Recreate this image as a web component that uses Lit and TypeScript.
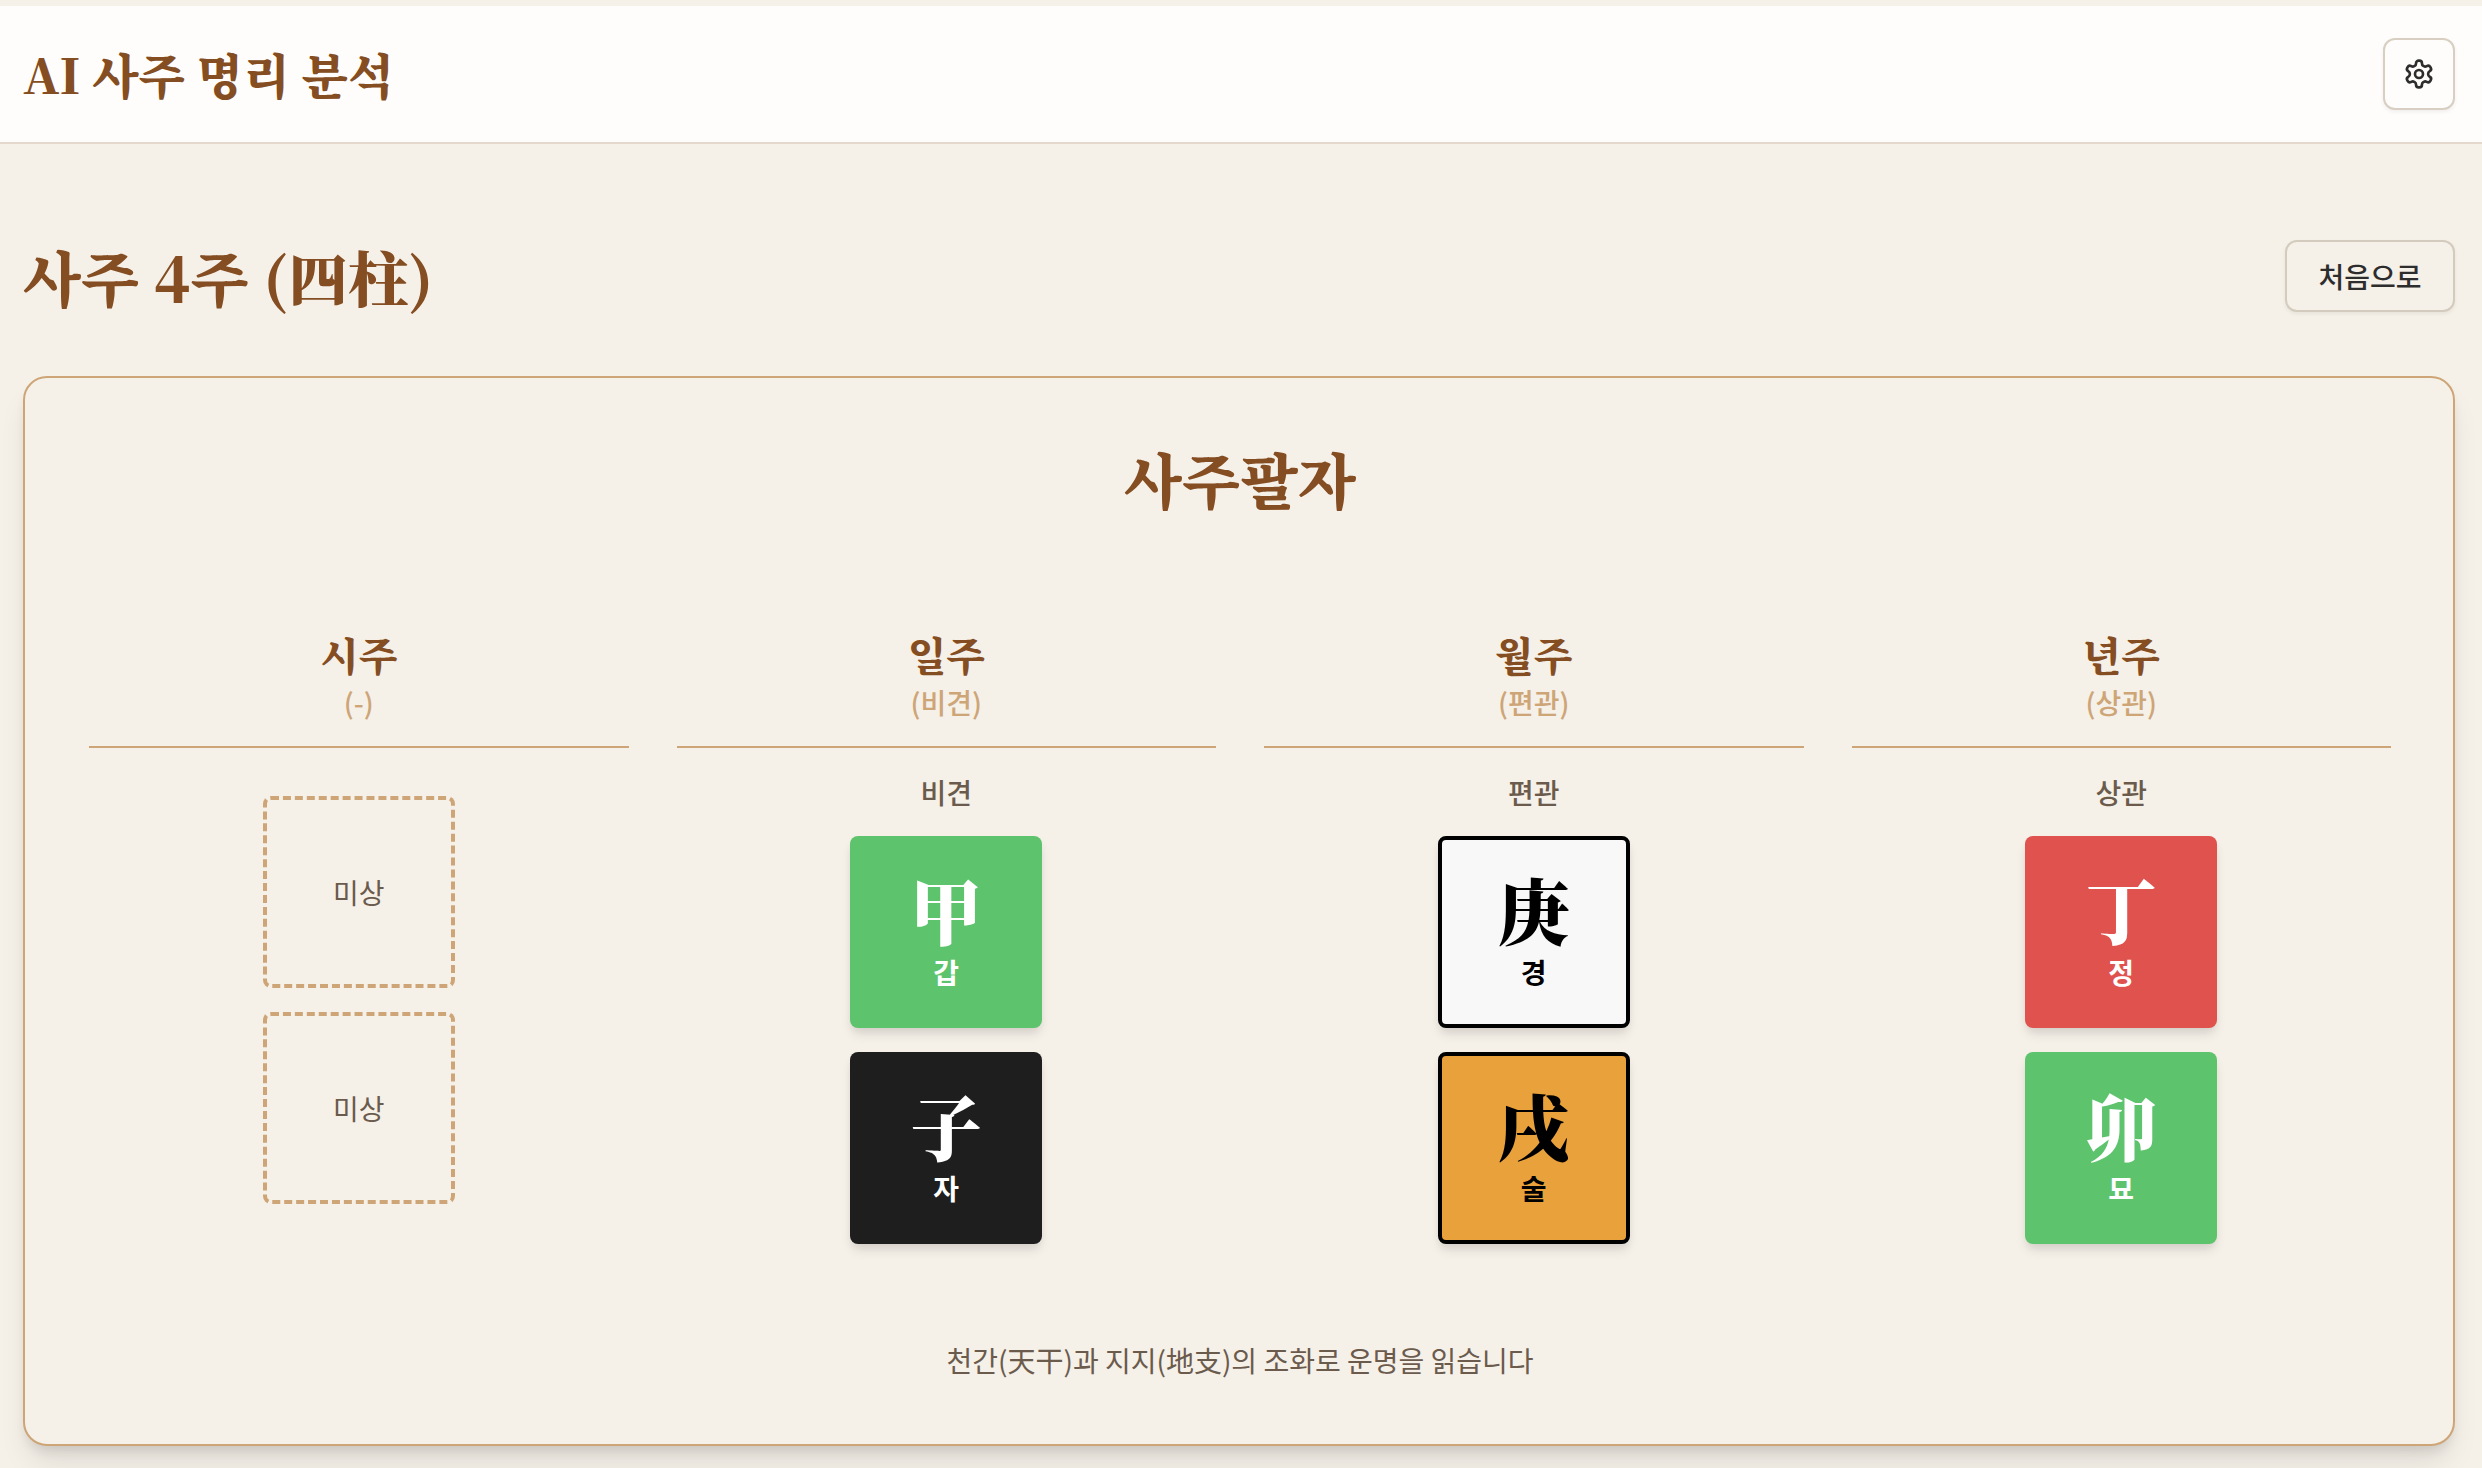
import { LitElement, html, css } from "lit";
import { customElement } from "lit/decorators.js";

const SERIF = css`"Noto Serif CJK KR","Liberation Serif","Noto Sans CJK KR",serif`;

type Tile = { h: string; k: string; cls: string };
type Pillar = { name: string; sub: string; label: string; tiles: Tile[] | null };

const PILLARS: Pillar[] = [
  { name: "시주", sub: "(-)", label: "", tiles: null },
  { name: "일주", sub: "(비견)", label: "비견", tiles: [{ h: "甲", k: "갑", cls: "green" }, { h: "子", k: "자", cls: "black" }] },
  { name: "월주", sub: "(편관)", label: "편관", tiles: [{ h: "庚", k: "경", cls: "white" }, { h: "戌", k: "술", cls: "orange" }] },
  { name: "년주", sub: "(상관)", label: "상관", tiles: [{ h: "丁", k: "정", cls: "red" }, { h: "卯", k: "묘", cls: "green" }] },
];

@customElement("app-root")
export class AppRoot extends LitElement {
  static styles = css`
    :host { display: block; min-height: 1468px; background: #f5f0e8; font-family: "Noto Sans CJK KR","Noto Sans",sans-serif; padding-top: 6px; box-sizing: border-box; overflow: hidden; }
    .top { height: 136px; background: #fefdfb; border-bottom: 2px solid #e5d8cc; display: flex; align-items: center; justify-content: space-between; padding: 0 27px 0 23px; }
    .brand { margin: 0; font: 900 48px/1 ${SERIF}; color: #854d22; }
    .gear { width: 72px; height: 72px; box-sizing: border-box; background: #fefdfb; border: 2px solid #d8cfc2; border-radius: 12px; display: flex; align-items: center; justify-content: center; box-shadow: 0 2px 4px rgba(0,0,0,.06); }
    .gear svg { width: 32px; height: 32px; }
    main { padding: 96px 27px 0 23px; }
    .head { display: flex; align-items: center; justify-content: space-between; height: 72px; margin-bottom: 64px; }
    .head h2 { margin: 0; font: 900 60px/1 ${SERIF}; color: #854d22; }
    .back { width: 170px; height: 72px; box-sizing: border-box; background: #f5f0e8; border: 2px solid #d3cbbd; border-radius: 12px; font: 500 28px/1 "Noto Sans CJK KR",sans-serif; color: #2d2d2d; display: flex; align-items: center; justify-content: center; box-shadow: 0 2px 4px rgba(0,0,0,.06); }
    .card { height: 1070px; box-sizing: border-box; border: 2px solid #cda577; border-radius: 24px; padding: 62px 62px 0 64px; box-shadow: 0 20px 30px -6px rgba(0,0,0,.1), 0 8px 12px -4px rgba(0,0,0,.1); background: #f5f0e8; }
    .card h3 { margin: 0; text-align: center; font: 900 60px/77px ${SERIF}; color: #854d22; }
    .cols { display: grid; grid-template-columns: repeat(4, 1fr); gap: 48px; margin-top: 113px; }
    .col { display: flex; flex-direction: column; align-items: center; }
    .colhead { align-self: stretch; height: 116px; border-bottom: 2px solid #cda577; text-align: center; }
    .name { font: 900 40px/48px ${SERIF}; color: #854d22; }
    .sub { font: 500 28px/40px "Noto Sans CJK KR",sans-serif; color: #cda577; margin-top: 4px; }
    .label { height: 40px; margin-top: 24px; margin-bottom: 24px; font: 500 28px/40px "Noto Sans CJK KR",sans-serif; color: #6b5b4d; }
    .stack { display: flex; flex-direction: column; gap: 24px; }
    .tile { width: 192px; height: 192px; box-sizing: border-box; border-radius: 8px; display: flex; flex-direction: column; align-items: center; justify-content: center; box-shadow: 0 8px 12px -2px rgba(0,0,0,.1), 0 4px 8px -2px rgba(0,0,0,.06); }
    .h { font: 900 72px/72px ${SERIF}; }
    .k { font: 700 28px/40px "Noto Sans CJK KR",sans-serif; margin-top: 8px; }
    .green { background: #5ec36d; color: #fff; }
    .black { background: #1e1e1e; color: #fff; }
    .red { background: #e0524d; color: #fff; }
    .white { background: #f8f8f8; color: #000; border: 4px solid #000; }
    .orange { background: #e9a23b; color: #000; border: 4px solid #000; }
    .empty { width: 192px; height: 192px; box-sizing: border-box; border: 4px dashed #cda577; border-radius: 8px; display: flex; align-items: center; justify-content: center; font: 400 28px/1 "Noto Sans CJK KR",sans-serif; color: #6b5b4d; }
    .gap { margin-top: 48px; }
    .foot { text-align: center; margin-top: 96px; font: 400 28px/40px "Noto Sans CJK KR",sans-serif; color: #6b5b4d; }
  `;

  render() {
    return html`
      <header class="top">
        <h1 class="brand">AI 사주 명리 분석</h1>
        <div class="gear">
          <svg viewBox="0 0 24 24" fill="none" stroke="#2d2d2d" stroke-width="2" stroke-linecap="round" stroke-linejoin="round">
            <path d="M12.22 2h-.44a2 2 0 0 0-2 2v.18a2 2 0 0 1-1 1.73l-.43.25a2 2 0 0 1-2 0l-.15-.08a2 2 0 0 0-2.73.73l-.22.38a2 2 0 0 0 .73 2.73l.15.1a2 2 0 0 1 1 1.72v.51a2 2 0 0 1-1 1.74l-.15.09a2 2 0 0 0-.73 2.73l.22.38a2 2 0 0 0 2.73.73l.15-.08a2 2 0 0 1 2 0l.43.25a2 2 0 0 1 1 1.73V20a2 2 0 0 0 2 2h.44a2 2 0 0 0 2-2v-.18a2 2 0 0 1 1-1.73l.43-.25a2 2 0 0 1 2 0l.15.08a2 2 0 0 0 2.73-.73l.22-.39a2 2 0 0 0-.73-2.73l-.15-.08a2 2 0 0 1-1-1.74v-.5a2 2 0 0 1 1-1.74l.15-.09a2 2 0 0 0 .73-2.73l-.22-.38a2 2 0 0 0-2.73-.73l-.15.08a2 2 0 0 1-2 0l-.43-.25a2 2 0 0 1-1-1.73V4a2 2 0 0 0-2-2z"/>
            <circle cx="12" cy="12" r="3"/>
          </svg>
        </div>
      </header>
      <main>
        <div class="head">
          <h2>사주 4주 (四柱)</h2>
          <div class="back">처음으로</div>
        </div>
        <section class="card">
          <h3>사주팔자</h3>
          <div class="cols">
            ${PILLARS.map((p) => html`
              <div class="col">
                <div class="colhead">
                  <div class="name">${p.name}</div>
                  <div class="sub">${p.sub}</div>
                </div>
                ${p.tiles
                  ? html`<div class="label">${p.label}</div>
                      <div class="stack">
                        ${p.tiles.map((t) => html`<div class="tile ${t.cls}"><div class="h">${t.h}</div><div class="k">${t.k}</div></div>`)}
                      </div>`
                  : html`<div class="stack gap"><div class="empty">미상</div><div class="empty">미상</div></div>`}
              </div>
            `)}
          </div>
          <div class="foot">천간(天干)과 지지(地支)의 조화로 운명을 읽습니다</div>
        </section>
      </main>
    `;
  }
}
